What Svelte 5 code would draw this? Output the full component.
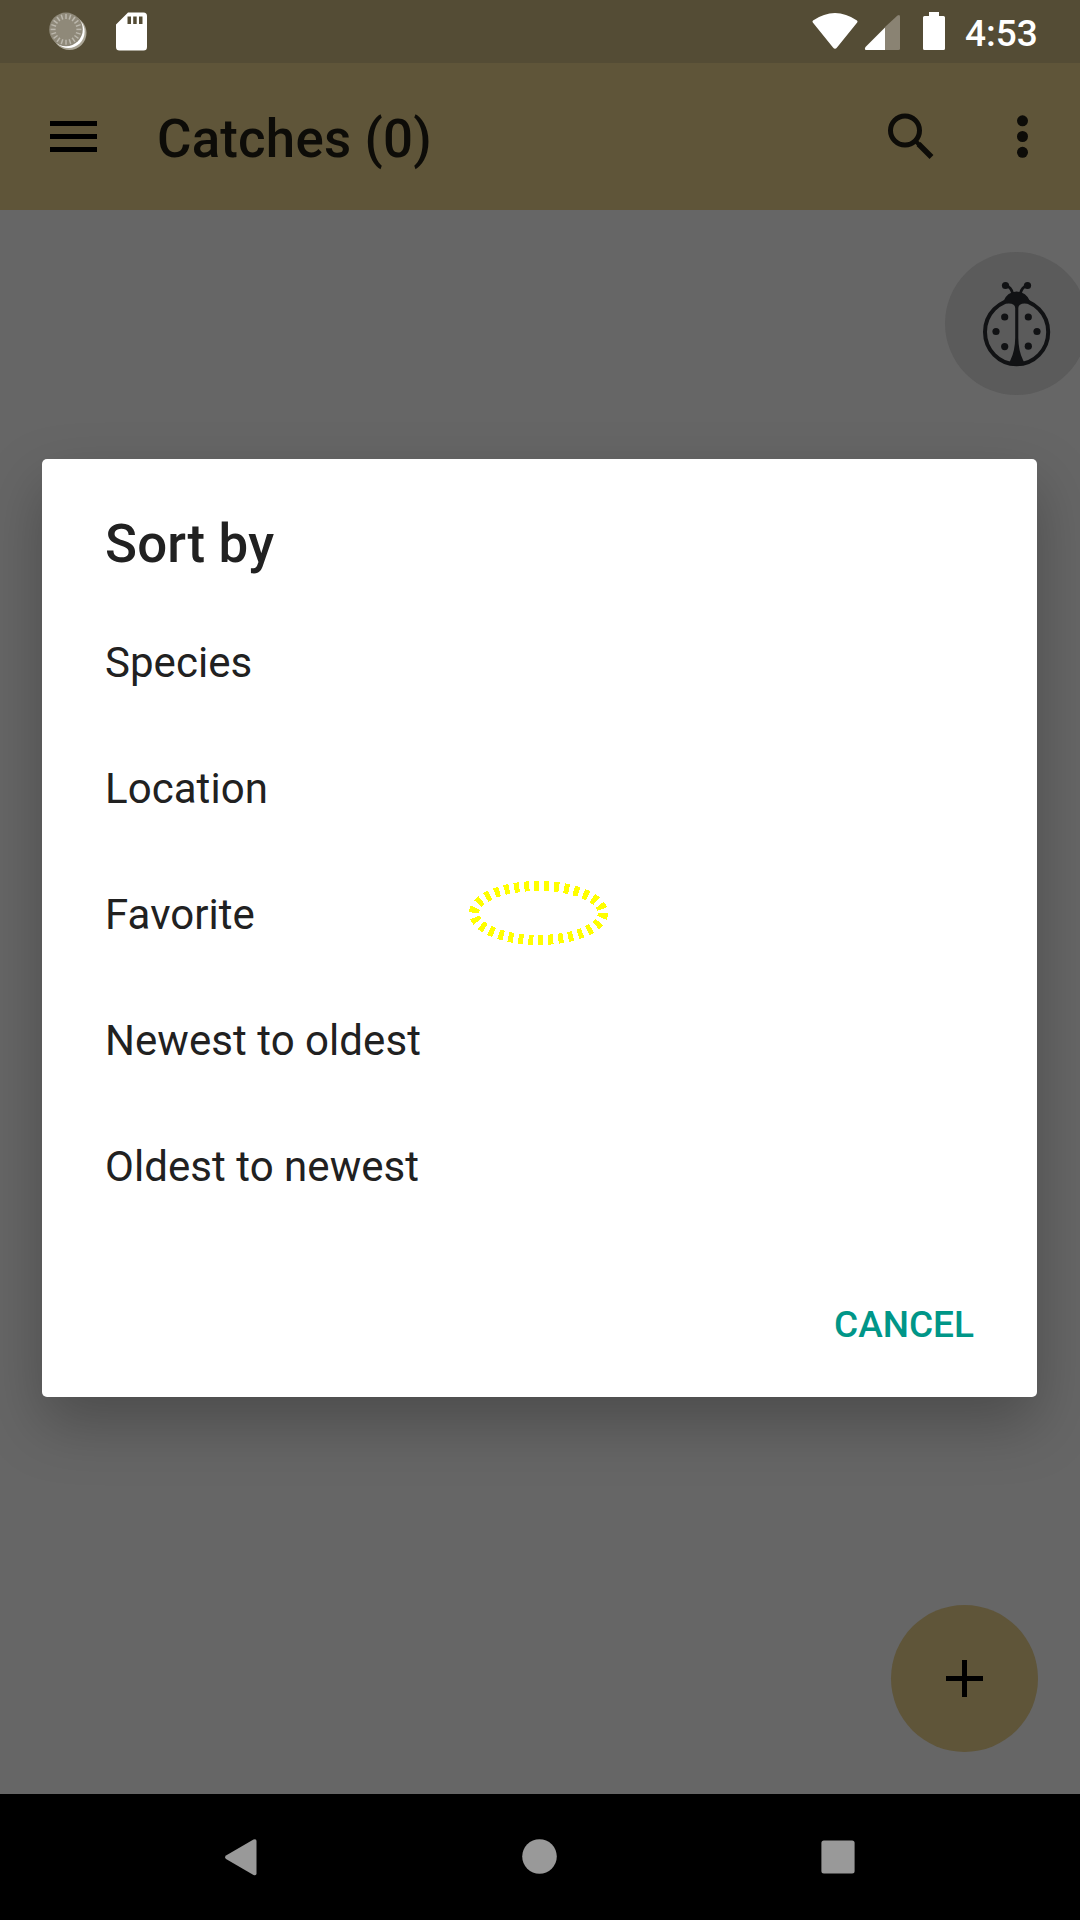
<script>
  const options = ['Species', 'Location', 'Favorite', 'Newest to oldest', 'Oldest to newest'];
  const ticks = Array.from({ length: 20 }, (_, i) => i * 18);
</script>

<div class="screen">
  <header class="status">
    <svg width="40" height="63" viewBox="48 0 40 63">
      <circle cx="69.5" cy="33" r="17" fill="#aaa595" />
      <circle cx="68.3" cy="31.8" r="16.3" fill="#fff" />
      <circle cx="66" cy="29.4" r="16.8" fill="#8f8979" />
      {#each ticks as angle}
        <path d="M66 14v5" stroke="#bbb7ac" stroke-width="1.5" transform="rotate({angle} 66 29.4)" />
      {/each}
    </svg>
    <svg class="sd" width="32" height="63" viewBox="116 0 32 63">
      <path fill="#fff" fill-rule="evenodd" d="M128 12.5h15.5q3.5 0 3.5 3.5v31q0 3.5-3.5 3.5h-24q-3.500 0-3.500-3.500V24.500zM127.500 16.500v7.500h3.500v-7.500zM133.200 16.500v7.500h3.500v-7.500zM139 16.500v7.500h3.500v-7.500z" />
    </svg>
    <div class="system">
      <svg width="46" height="63" viewBox="812 0 46 63">
        <path fill="#fff" d="M813 20.500Q835 5.500 857 20.500q1 1 .2 2L837 47.500q-2 2.500-4 0L812.800 22.500q-.8-1 .2-2z" />
      </svg>
      <svg class="signal" width="37" height="63" viewBox="864 0 37 63">
        <path fill="#8a8373" d="M885 27L897.500 15.500q2.500-1.500 2.500 1V48.500q0 1.500-1.500 1.500H885z" />
        <path fill="#fff" d="M885 27.500V50H866q-2-.5-.5-3z" />
      </svg>
      <svg class="battery" width="22" height="63" viewBox="923 0 22 63">
        <path fill="#fff" d="M929 12h10v4h4.500q1.500 0 1.500 1.500v31q0 1.500-1.500 1.500h-19q-1.500 0-1.500-1.500v-31q0-1.500 1.500-1.500h4.500z" />
      </svg>
      <span class="time">4:53</span>
    </div>
  </header>

  <div class="appbar">
    <svg width="47" height="32" viewBox="0 0 47 32"><path d="M0 0h47v5H0zM0 13h47v5H0zM0 26h47v5H0z" /></svg>
    <h1>Catches (0)</h1>
    <svg class="search" width="48" height="48" viewBox="887 112.500 48 48" fill="none" stroke="#0d0c08">
      <circle cx="905" cy="130" r="14.500" stroke-width="5" />
      <path d="M918.500 143.500L931.500 156.500" stroke-width="5.500" />
      <path d="M916 141L920 145" stroke-width="4" />
    </svg>
    <svg class="more" width="12" height="46" viewBox="0 0 12 46" fill="#0d0c08">
      <circle cx="5.500" cy="6.800" r="5.500" /><circle cx="5.500" cy="22.500" r="5.500" /><circle cx="5.500" cy="38.300" r="5.500" />
    </svg>
  </div>

  <main>
    <div class="bug">
      <svg width="72" height="90" viewBox="981 279 72 90" fill="#111214">
        <ellipse cx="1016.600" cy="332" rx="31.600" ry="32.300" fill="none" stroke="#111214" stroke-width="4" />
        <path d="M1003 302Q1007 291.500 1016.600 291.500T1030.500 302L1026 303.500Q1018.500 303 1018.300 308V338Q1018.500 351 1023 360L1025 364Q1017 367.500 1008.500 364L1010.500 360Q1015 351 1015.200 338V308Q1015 303 1007.500 303.500z" />
        <path d="M1006 285.500Q1011 287 1012.500 293M1027 285.500Q1022 287 1020.500 293" fill="none" stroke="#111214" stroke-width="2.800" />
        <circle cx="1005.500" cy="285.500" r="3.600" /><circle cx="1027.500" cy="285.500" r="3.600" />
        <circle cx="1004.700" cy="317" r="3.600" /><circle cx="1028.300" cy="317" r="3.600" />
        <circle cx="996" cy="331.500" r="3.600" /><circle cx="1037" cy="331.500" r="3.600" />
        <circle cx="1004.700" cy="346.600" r="3.600" /><circle cx="1028.300" cy="346.200" r="3.600" />
      </svg>
    </div>
    <div class="fab">
      <svg width="37" height="37" viewBox="0 0 37 37"><path d="M16 0h5v16h16v5H21v16h-5V21H0v-5h16z" /></svg>
    </div>
  </main>

  <nav>
    <svg width="32" height="38" viewBox="225 1838 32 38"><path fill="#999" d="M226 1855.500L253.500 1839.500q3-1 3 1.500v32.500q0 2.500-3 1.500L226 1859q-2-1.700 0-3.500z" /></svg>
    <svg width="36" height="36" viewBox="0 0 36 36"><circle cx="18.500" cy="17.500" r="17.300" fill="#999" /></svg>
    <svg width="34" height="34" viewBox="0 0 34 34"><rect x=".4" y=".4" width="33.200" height="33.200" rx="2.500" fill="#999" /></svg>
  </nav>

  <div class="dialog" role="dialog">
    <h2>Sort by</h2>
    <ul>
      {#each options as option}
        <li>{option}</li>
      {/each}
    </ul>
    <div class="actions"><button>CANCEL</button></div>
    <svg class="marker" width="140" height="66" viewBox="469 880 140 66">
      <ellipse cx="538.500" cy="913" rx="64.500" ry="27" fill="none" stroke="#ff0" stroke-width="10" stroke-dasharray="5 5" shape-rendering="crispEdges" />
    </svg>
  </div>
</div>

<style>
  :global(body) { margin: 0; }
  .screen {
    position: relative;
    width: 1080px;
    height: 1920px;
    display: grid;
    grid-template-rows: 63px 147px 1584px 126px;
    overflow: hidden;
    background: #666;
    font-family: Roboto, sans-serif;
  }
  svg { display: block; flex: none; }
  .status {
    display: flex;
    background: #544c35;
    padding: 0 43px 0 48px;
  }
  .sd { margin-left: 28px; }
  .system { display: flex; margin-left: auto; }
  .signal { margin-left: 6px; }
  .battery { margin-left: 22px; }
  .time {
    width: 72px;
    margin-left: 20px;
    color: #fff;
    font-size: 37px;
    font-weight: 500;
    line-height: 68px;
    white-space: nowrap;
  }
  .appbar {
    display: flex;
    align-items: center;
    background: #5f5539;
    padding: 0 51px 0 50px;
  }
  h1, h2 {
    margin: 0;
    font-size: 52.8px;
    font-weight: 500;
    letter-spacing: 0.2px;
    line-height: 62px;
  }
  h1 { margin-left: 60px; padding-top: 5px; color: #0d0c08; }
  .search { margin-left: auto; }
  .more { margin-left: 82px; }
  .bug, .fab {
    position: absolute;
    display: flex;
    align-items: center;
    justify-content: center;
    border-radius: 50%;
  }
  .bug { left: 945px; top: 252px; width: 143px; height: 143px; background: #5b5b5b; }
  .fab { left: 891px; top: 1605px; width: 147px; height: 147px; background: #5f5539; }
  nav {
    display: flex;
    align-items: center;
    justify-content: space-between;
    background: #000;
    padding: 0 225px;
  }
  .dialog {
    position: absolute;
    left: 42px;
    top: 459px;
    width: 995px;
    height: 938px;
    box-sizing: border-box;
    display: flex;
    flex-direction: column;
    border-radius: 5px;
    background: #fff;
    color: #212121;
    padding: 54px 63px 0;
    box-shadow: 0 26px 60px rgba(0, 0, 0, 0.26);
  }
  ul { list-style: none; margin: 25px 0 0; padding: 0; }
  li { height: 126px; font-size: 42px; letter-spacing: 0.05px; line-height: 126px; }
  .actions { display: flex; justify-content: flex-end; margin-top: 73px; }
  button {
    border: 0;
    padding: 0;
    background: none;
    color: #009688;
    font: 500 37px/44px Roboto, sans-serif;
  }
  .marker { position: absolute; left: 427px; top: 421px; }
</style>
